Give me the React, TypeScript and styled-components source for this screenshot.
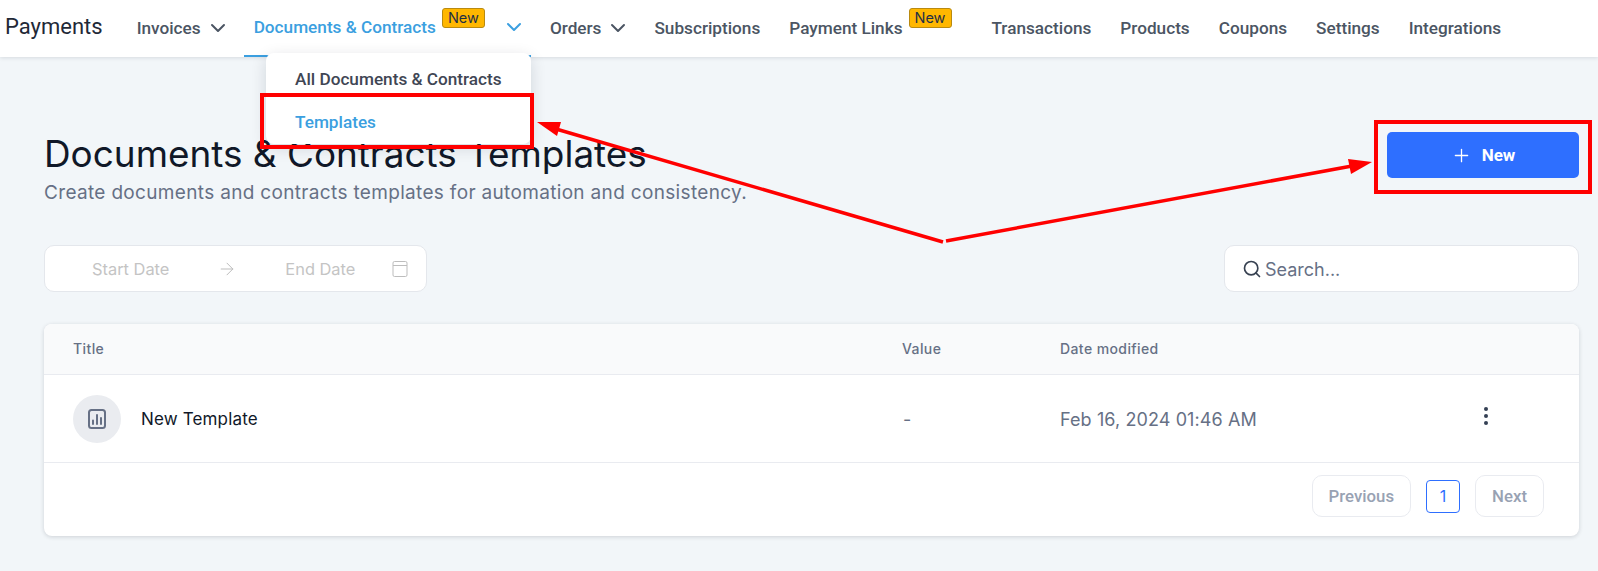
import React from 'react';

import styled, { createGlobalStyle } from 'styled-components';

import { ArrowRight, ChevronDown, Plus, Search } from 'lucide-react';

type NavEntry = {
  label: string;
  hasChevron?: boolean;
  hasBadge?: boolean;
  active?: boolean;
};

const NAV_ENTRIES: NavEntry[] = [
  { label: 'Invoices', hasChevron: true },
  { label: 'Documents & Contracts', hasChevron: true, hasBadge: true, active: true },
  { label: 'Orders', hasChevron: true },
  { label: 'Subscriptions' },
  { label: 'Payment Links', hasBadge: true },
  { label: 'Transactions' },
  { label: 'Products' },
  { label: 'Coupons' },
  { label: 'Settings' },
  { label: 'Integrations' },
];

const App = (): JSX.Element => {
  return (
    <>
      <GlobalStyle />
      <Page>
        <TopBar>
          <Brand>Payments</Brand>
          <NavList>
            {NAV_ENTRIES.map((entry) => (
              <NavItem key={entry.label} $active={entry.active} $hasBadge={entry.hasBadge && !entry.hasChevron}>
                {entry.label}
                {entry.hasBadge && <NewBadge>New</NewBadge>}
                {entry.hasChevron && (
                  <NavChevron $spaced={entry.hasBadge}>
                    <ChevronDown size={24} strokeWidth={2} />
                  </NavChevron>
                )}
              </NavItem>
            ))}
          </NavList>
        </TopBar>

        <Dropdown>
          <DropdownItem>All Documents &amp; Contracts</DropdownItem>
          <DropdownItem $active>Templates</DropdownItem>
        </Dropdown>

        <Main>
          <HeadRow>
            <div>
              <Title>Documents &amp; Contracts Templates</Title>
              <Subtitle>Create documents and contracts templates for automation and consistency.</Subtitle>
            </div>
            <NewButton>
              <Plus size={21} strokeWidth={1.5} />
              New
            </NewButton>
          </HeadRow>

          <Toolbar>
            <DateRange>
              <DateText>Start Date</DateText>
              <DateArrow size={20} strokeWidth={1.2} color="#bdbdbd" />
              <DateText>End Date</DateText>
              <CalendarIcon width="16" height="16" viewBox="0 0 16 16" fill="none" stroke="#bdbdbd" strokeWidth="1">
                <rect x="1" y="0.5" width="14" height="15" rx="1.5" />
                <path d="M1 4.5h14" />
              </CalendarIcon>
            </DateRange>
            <SearchBox>
              <Search size={20} strokeWidth={2} color="#374151" />
              <SearchInput placeholder="Search..." />
            </SearchBox>
          </Toolbar>

          <TableCard>
            <HeaderRow>
              <HeaderCell>Title</HeaderCell>
              <HeaderCell>Value</HeaderCell>
              <HeaderCell>Date modified</HeaderCell>
            </HeaderRow>
            <BodyRow>
              <TitleCell>
                <IconCircle>
                  <svg width="18" height="20" viewBox="0 0 18 20" fill="none" stroke="#667085" strokeWidth="2" strokeLinecap="round">
                    <rect x="1" y="1" width="16" height="18" rx="2.5" />
                    <path d="M5 15v-3.5M9 15V6M13 15V9" />
                  </svg>
                </IconCircle>
                <TemplateName>New Template</TemplateName>
              </TitleCell>
              <MutedCell>-</MutedCell>
              <MutedCell>Feb 16, 2024 01:46 AM</MutedCell>
              <Kebab>
                <KebabDot />
                <KebabDot />
                <KebabDot />
              </Kebab>
            </BodyRow>
            <Pagination>
              <PageButton>Previous</PageButton>
              <PageNumber>1</PageNumber>
              <PageButton>Next</PageButton>
            </Pagination>
          </TableCard>
        </Main>

        <HighlightTemplates />
        <HighlightNew />
        <ArrowLayer width="1598" height="571" viewBox="0 0 1598 571">
          <path d="M943 242L556 129" stroke="#f00" strokeWidth="3.5" fill="none" />
          <path d="M537 122L561 122L557 136Z" fill="#f00" />
          <path d="M946 241L1352 166" stroke="#f00" strokeWidth="3.5" fill="none" />
          <path d="M1372 162L1348 159L1351 174Z" fill="#f00" />
        </ArrowLayer>
      </Page>
    </>
  );
};

const GlobalStyle = createGlobalStyle`
  html, body {
    margin: 0;
    padding: 0;
  }

  body {
    background: #f2f6f9;
    font-family: 'Inter', 'Liberation Sans', sans-serif;
    overflow: hidden;
  }

  * {
    box-sizing: border-box;
  }
`;

const Page = styled.div`
  height: 571px;
  overflow: hidden;
  position: relative;
  width: 1598px;
`;

const TopBar = styled.header`
  align-items: stretch;
  background: #fff;
  box-shadow: 0 1px 4px rgba(16, 24, 40, 0.12);
  display: flex;
  height: 57px;
  padding-left: 5px;
`;

const Brand = styled.div`
  align-self: center;
  color: #1f2937;
  font-family: 'Roboto', sans-serif;
  font-size: 22px;
  margin-bottom: 5px;
  margin-right: 24px;
`;

const NavList = styled.nav`
  display: flex;
  gap: 9px;
`;

const NavItem = styled.div<{ $active?: boolean; $hasBadge?: boolean }>`
  align-items: center;
  border-bottom: 2px solid ${({ $active }) => ($active ? '#3b9fe0' : 'transparent')};
  color: ${({ $active }) => ($active ? '#3b9fe0' : '#4b5563')};
  display: flex;
  font-family: 'Roboto', sans-serif;
  font-size: 17.2px;
  font-weight: 500;
  height: 57px;
  padding: 0 10px ${({ $active }) => ($active ? '2px' : '0')};
  padding-right: ${({ $hasBadge }) => ($hasBadge ? '21px' : '10px')};
  position: relative;
`;

const NewBadge = styled.span`
  align-self: flex-start;
  background: #ffb700;
  border: 1px solid #b98a10;
  border-radius: 3px;
  color: #1f2f45;
  font-family: 'Inter', sans-serif;
  font-size: 14.5px;
  font-weight: 400;
  height: 20px;
  line-height: 18px;
  margin-left: 6px;
  margin-top: 8px;
  text-align: center;
  width: 43px;
`;

const NavChevron = styled.span<{ $spaced?: boolean }>`
  display: flex;
  margin-left: ${({ $spaced }) => ($spaced ? '17px' : '5px')};
  margin-right: -5px;
`;

const Dropdown = styled.div`
  background: #fff;
  border-radius: 8px;
  box-shadow: 0 4px 16px rgba(16, 24, 40, 0.14);
  left: 266px;
  padding: 5px 0 0;
  position: absolute;
  top: 53px;
  width: 265px;
`;

const DropdownItem = styled.div<{ $active?: boolean }>`
  color: ${({ $active }) => ($active ? '#3b9fe0' : '#3f4654')};
  font-family: 'Roboto', sans-serif;
  font-size: 17.2px;
  font-weight: 500;
  height: 43px;
  line-height: 43px;
  padding-left: 29px;
`;

const Main = styled.main`
  padding: 75px 19px 0 44px;
`;

const HeadRow = styled.div`
  align-items: flex-start;
  display: flex;
  justify-content: space-between;
`;

const Title = styled.h1`
  color: #101828;
  font-size: 36.9px;
  font-weight: 400;
  line-height: 44px;
  margin: 0;
`;

const Subtitle = styled.p`
  color: #667085;
  font-size: 19px;
  letter-spacing: 0.33px;
  line-height: 26px;
  margin: 4px 0 0;
`;

const NewButton = styled.button`
  align-items: center;
  background: #2e6fff;
  border: none;
  border-radius: 5px;
  color: #fff;
  display: flex;
  font-family: 'Roboto', sans-serif;
  font-size: 17px;
  font-weight: 700;
  gap: 10px;
  height: 46px;
  justify-content: center;
  padding: 0;
  width: 192px;
`;

const Toolbar = styled.div`
  display: flex;
  justify-content: space-between;
  margin-top: 39px;
`;

const DateRange = styled.div`
  align-items: center;
  background: #fff;
  border: 1px solid #e4e7ec;
  border-radius: 10px;
  display: flex;
  height: 47px;
  padding: 0 18px 0 47px;
  width: 383px;
`;

const DateText = styled.span`
  color: #c4c4c4;
  font-size: 16.4px;
`;

const DateArrow = styled(ArrowRight)`
  margin: 0 48px 0 48px;
`;

const CalendarIcon = styled.svg`
  margin-left: auto;
`;

const SearchBox = styled.div`
  align-items: center;
  background: #fff;
  border: 1px solid #e4e7ec;
  border-radius: 10px;
  display: flex;
  gap: 3px;
  height: 47px;
  padding-left: 17px;
  width: 355px;
`;

const SearchInput = styled.input`
  background: transparent;
  border: none;
  color: #667085;
  flex: 1;
  font-family: 'Inter', sans-serif;
  font-size: 18px;
  margin-top: 1px;
  outline: none;
  padding: 0;

  &::placeholder {
    color: #667085;
    opacity: 1;
  }
`;

const TableCard = styled.section`
  background: #fff;
  border-radius: 8px;
  box-shadow: 0 1px 4px rgba(16, 24, 40, 0.16);
  margin-top: 32px;
  overflow: hidden;
`;

const HeaderRow = styled.div`
  align-items: center;
  background: #f9fafb;
  border-bottom: 1px solid #e9ebf0;
  display: grid;
  grid-template-columns: 829px 158px 1fr;
  height: 51px;
  padding: 0 0 2px 29px;
`;

const HeaderCell = styled.span`
  color: #667085;
  font-size: 14px;
  font-weight: 500;
  letter-spacing: 0.4px;
`;

const BodyRow = styled.div`
  align-items: center;
  border-bottom: 1px solid #e9ebf0;
  display: grid;
  grid-template-columns: 830px 157px 1fr 24px;
  height: 88px;
  padding: 0 81px 0 29px;
`;

const TitleCell = styled.div`
  align-items: center;
  color: #101828;
  display: flex;
  font-size: 17px;
  gap: 20px;
  letter-spacing: 0.15px;
`;

const TemplateName = styled.span`
  padding-top: 1px;
`;

const IconCircle = styled.span`
  align-items: center;
  background: #eaecf0;
  border-radius: 50%;
  display: flex;
  height: 48px;
  justify-content: center;
  width: 48px;
`;

const MutedCell = styled.span`
  color: #667085;
  font-size: 18px;
  letter-spacing: 0.1px;
  padding-top: 1px;
`;

const Kebab = styled.div`
  align-items: center;
  display: flex;
  flex-direction: column;
  gap: 3px;
  margin-bottom: 6px;
`;

const KebabDot = styled.span`
  background: #344054;
  border-radius: 50%;
  height: 4px;
  width: 4px;
`;

const Pagination = styled.div`
  align-items: flex-start;
  display: flex;
  gap: 15px;
  height: 73px;
  justify-content: flex-end;
  padding: 12px 35px 0 0;
`;

const PageButton = styled.button`
  background: #fff;
  border: 1px solid #e9ebf0;
  border-radius: 10px;
  color: #98a2b3;
  font-family: 'Roboto', sans-serif;
  font-size: 16.8px;
  font-weight: 500;
  height: 42px;
  padding: 0 16px;
`;

const PageNumber = styled.span`
  border: 1px solid #2e6fff;
  border-radius: 4px;
  color: #2e6fff;
  font-size: 16px;
  height: 33px;
  line-height: 31px;
  margin-top: 5px;
  text-align: center;
  width: 34px;
`;

const HighlightTemplates = styled.div`
  border: 4px solid #f00;
  height: 56px;
  left: 260px;
  position: absolute;
  top: 93px;
  width: 274px;
`;

const HighlightNew = styled.div`
  border: 4px solid #f00;
  height: 74px;
  left: 1374px;
  position: absolute;
  top: 120px;
  width: 218px;
`;

const ArrowLayer = styled.svg`
  left: 0;
  pointer-events: none;
  position: absolute;
  top: 0;
`;

export default App;
